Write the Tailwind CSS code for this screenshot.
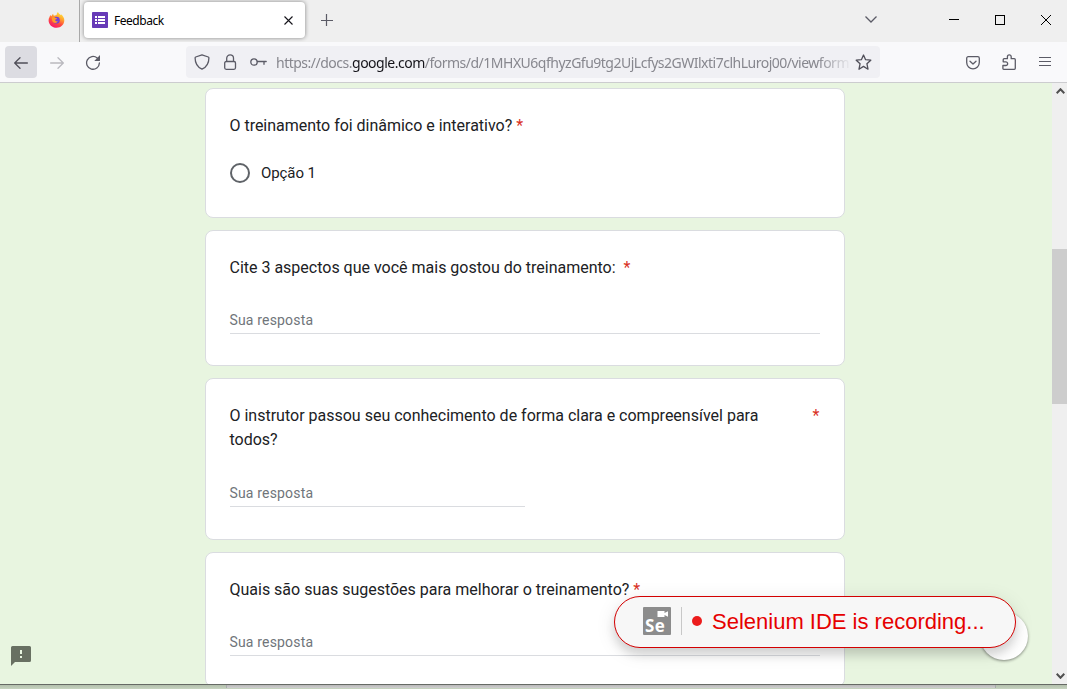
<!DOCTYPE html>
<html lang="pt-BR">
<head>
<meta charset="utf-8">
<title>Feedback</title>
<script src="https://cdn.jsdelivr.net/npm/@tailwindcss/browser@4"></script>
</head>
<body class="relative flex h-[689px] w-[1067px] flex-col overflow-hidden bg-[#c3cfbd] font-['Roboto',sans-serif] text-[#202124]">
  <!-- Tab strip -->
  <header class="flex h-[42px] shrink-0 bg-[#efefef] font-['Noto_Sans',sans-serif]">
    <div class="flex w-20 shrink-0 border-r border-[#a9a9a9] pt-3 pl-12">
      <svg class="h-4 w-[17px]" viewBox="0 0 17 16">
        <defs>
          <linearGradient id="fire" x1=".8" y1="0" x2=".3" y2="1"><stop offset="0" stop-color="#fff044"/><stop offset=".35" stop-color="#ffa52d"/><stop offset=".65" stop-color="#ff4c3f"/><stop offset="1" stop-color="#f5156c"/></linearGradient>
        </defs>
        <path fill="url(#fire)" d="M1.400 5.200 2.300 3l1 1.200L5 1.700l.8 2L8.600 3c.1-1.500.6-2.300 1.400-3 .5 1.500 1.700 1.900 2.600 3l.8-.4c1.700 1.700 2.900 3.500 2.900 5.600 0 4.300-3.300 7.500-7.700 7.500S.6 12.500.6 8.400c0-1.200.2-2.200.8-3.200Z"/>
        <circle cx="8.400" cy="8.200" r="3.400" fill="#7542d5"/>
        <path fill="#ff9b26" d="M4 5.500c1.500-.8 3-.4 3.500.5l1.600.2c-.2.900-1.300 1.200-2 1.500.1 1.300 1.200 1.900 2.700 1.300C9.300 11 6.500 11.600 5 10 3.900 8.700 3.700 7 4 5.500Z"/>
      </svg>
    </div>
    <div class="mt-[2px] ml-1 flex h-9 w-[221px] items-center rounded bg-white pl-2 shadow-[0_0_4px_rgba(0,0,0,.45)]">
      <svg class="size-4" viewBox="0 0 16 16"><rect width="16" height="16" rx=".8" fill="#673ab7"/><path fill="#fff" d="M3 4h2v2H3zm3 0h7v2H6zM3 7h2v2H3zm3 0h7v2H6zM3 10h2v2H3zm3 0h7v2H6z"/></svg>
      <span class="mt-px ml-[6px] text-[12px] tracking-[-0.47px] text-black">Feedback</span>
      <svg class="mr-3 ml-auto size-[9px]" viewBox="0 0 9 9" fill="none" stroke="#15141a" stroke-width="1.100"><path d="m.5.500 8 8m0-8-8 8"/></svg>
    </div>
    <svg class="mt-[14px] ml-4 size-3" viewBox="0 0 12 12" stroke="#5b5b66" stroke-width="1.200"><path d="M5.500 0v12M0 6.500h12"/></svg>
    <svg class="mt-4 ml-auto h-[7px] w-3" viewBox="0 0 12 7" fill="none" stroke="#5b5b66" stroke-width="1.300"><path d="m.5.500 5.500 5.500 5.500-5.500"/></svg>
    <div class="mt-[19px] ml-[72px] h-px w-[10px] bg-black"></div>
    <div class="mt-[15px] ml-9 size-[10px] border border-black"></div>
    <svg class="mt-[15px] mr-4 ml-9 size-[10px]" viewBox="0 0 10 10" stroke="#000" stroke-width="1"><path d="m0 0 10 10M10 0 0 10"/></svg>
  </header>

  <!-- Navigation toolbar -->
  <nav class="flex h-[41px] shrink-0 border-b border-[#cccccf] bg-[#f9f9fb] pt-1 font-['Noto_Sans',sans-serif]">
    <div class="ml-[5px] flex size-8 items-center justify-center rounded bg-[#dcdce2]">
      <svg class="mt-px h-3 w-[14px]" viewBox="0 0 14 12" fill="none" stroke="#4f4e58" stroke-width="1.300" stroke-linecap="round"><path d="M13.400 6H.8M6 .8.700 6 6 11.200"/></svg>
    </div>
    <svg class="mt-[11px] ml-[13px] h-3 w-[14px]" viewBox="0 0 14 12" fill="none" stroke="#bab9bf" stroke-width="1.300" stroke-linecap="round"><path d="M.6 6h12.600M8 .8 13.300 6 8 11.200"/></svg>
    <svg class="mt-2 ml-[21px] size-4" viewBox="0 0 16 16" fill="none" stroke="#5b5b66" stroke-width="1.300" stroke-linecap="round"><path d="M12.200 4A6.400 6.400 0 1 0 14.400 9"/><path fill="#5b5b66" stroke="none" d="M15 1v5.400c0 .3-.2.500-.5.500H9.300z"/></svg>
    <div class="ml-[85px] flex h-8 w-[694px] rounded bg-[#f0f0f4]">
      <svg class="mt-2 ml-2 size-4" viewBox="0 0 16 16" fill="none" stroke="#5b5b66" stroke-width="1.300" stroke-linejoin="round"><path d="M8 .8 14.300 3c.5.200.6.500.6.900 0 5-2.200 9-6.900 11.300C3.300 12.900 1.100 8.900 1.100 3.900c0-.4.100-.7.600-.9z"/></svg>
      <svg class="mt-2 ml-3 size-4" viewBox="0 0 16 16" fill="none" stroke="#5b5b66" stroke-width="1.300"><rect x="2.700" y="7.500" width="10.800" height="7.800" rx="1.500"/><path d="M4.700 7.500V4.300a3.400 3.400 0 0 1 6.800 0v3.200"/></svg>
      <svg class="mt-2 ml-3 h-4 w-[17px]" viewBox="0 0 17 16" fill="none" stroke="#5b5b66" stroke-width="1.300" stroke-linecap="round"><circle cx="4" cy="8" r="3.200"/><path d="M7.400 7.500h8.800M14 7.800v2.500"/></svg>
      <div class="ml-[9px] h-8 w-[576px] text-[14px] leading-[34px] tracking-[-0.5px] whitespace-nowrap text-[#87878e] [mask-image:linear-gradient(to_right,#000_94%,transparent)]">https://docs.<span class="text-[#15141a]">google.com</span>/forms/d/1MHXU6qfhyzGfu9tg2UjLcfys2GWIlxti7clhLuroj00/viewform</div>
      <svg class="mt-2 ml-[3px] size-[17px]" viewBox="0 0 17 17" fill="none" stroke="#4f4e58" stroke-width="1.300" stroke-linejoin="round"><path d="m8.500 1 2.100 4.700 5.200.5-3.900 3.500 1.100 5.500-4.500-2.800-4.500 2.800 1.100-5.500-3.900-3.500 5.200-.5z"/></svg>
    </div>
    <svg class="mt-[10px] ml-[86px] h-[14px] w-[14px]" viewBox="0 0 14 14" fill="none" stroke="#5b5b66" stroke-width="1.300" stroke-linecap="round" stroke-linejoin="round"><path d="M2.200.7h9.600a1.500 1.500 0 0 1 1.500 1.500v4.300a6.300 6.300 0 0 1-12.600 0V2.200A1.500 1.500 0 0 1 2.200.7Z"/><path d="M4 5.200 7 8l3-2.800"/></svg>
    <svg class="mt-2 ml-[22px] h-[17px] w-[15px]" viewBox="0 0 15 17" fill="none" stroke="#5b5b66" stroke-width="1.300" stroke-linejoin="round"><path d="M1.700 15.300h10.600a1 1 0 0 0 1-1V5.700a1 1 0 0 0-1-1H9.200V2.800a1.900 1.900 0 0 0-3.800 0v1.900H2.200a1 1 0 0 0-1 1v2.100h2.600a1.800 1.800 0 0 1 0 3.700H.9v3a.8.800 0 0 0 .8.800Z"/></svg>
    <svg class="mt-[10px] ml-[22px] h-3 w-3" viewBox="0 0 12 12" stroke="#5b5b66" stroke-width="1.200"><path d="M0 1.500h12M0 5.500h12M0 9.500h12"/></svg>
  </nav>

  <!-- Page -->
  <div class="flex h-[602px] shrink-0 border-b border-[#666a65] bg-[#e8f5e0]">
    <main class="ml-[205px] flex w-[640px] shrink-0 flex-col gap-3 overflow-hidden pt-[5px] text-[16px] leading-6">
      <section class="h-[130px] shrink-0 rounded-lg border border-[#dadce0] bg-white pt-[25px] pr-6 pl-[23.500px]">
        <h2 class="tracking-[-0.02px]">O treinamento foi dinâmico e interativo? <span class="text-[#d93025]">*</span></h2>
        <label class="mt-[25px] flex items-center text-[15px] leading-5 tracking-[-0.08px]"><span class="mr-[11.500px] size-5 rounded-full border-2 border-[#5f6368]"></span>Opção 1</label>
      </section>
      <section class="h-[136px] shrink-0 rounded-lg border border-[#dadce0] bg-white pt-[25px] pr-6 pl-[23.500px]">
        <h2 class="tracking-[-0.005px]">Cite 3 aspectos que você mais gostou do treinamento: &nbsp;<span class="text-[#d93025]">*</span></h2>
        <div class="mt-[28px] h-[26px] border-b border-[#dadce0] text-[14px] tracking-[0.17px] text-[#70757a]">Sua resposta</div>
      </section>
      <section class="h-[162px] shrink-0 rounded-lg border border-[#dadce0] bg-white pt-[25px] pr-6 pl-[23.500px]">
        <div class="flex justify-between"><h2 class="w-[560px] tracking-[0px]">O instrutor passou seu conhecimento de forma clara e compreensível para todos?</h2><span class="mr-[0.500px] text-[#d93025]">*</span></div>
        <div class="mt-[29px] h-[26px] w-[295px] border-b border-[#dadce0] text-[14px] tracking-[0.17px] text-[#70757a]">Sua resposta</div>
      </section>
      <section class="h-[135px] shrink-0 rounded-lg border border-[#dadce0] bg-white pt-[25px] pr-6 pl-[23.500px]">
        <h2 class="tracking-[-0.005px]">Quais são suas sugestões para melhorar o treinamento? <span class="text-[#d93025]">*</span></h2>
        <div class="mt-[28px] h-[26px] border-b border-[#dadce0] text-[14px] tracking-[0.17px] text-[#70757a]">Sua resposta</div>
      </section>
    </main>
    <aside class="ml-auto flex w-[15px] flex-col items-center bg-[#efefef] pt-[5px] pb-[5px]">
      <svg class="ml-[2px] h-[6px] w-[9px]" viewBox="0 0 9 6" fill="none" stroke="#505050" stroke-width="2"><path d="m.7 5.200 3.800-4 3.800 4"/></svg>
      <div class="mt-[155px] h-[155px] w-full bg-[#cdcdcd]"></div>
      <svg class="mt-auto ml-[2px] h-[6px] w-[9px]" viewBox="0 0 9 6" fill="none" stroke="#505050" stroke-width="2"><path d="m.7.800 3.800 4 3.800-4"/></svg>
    </aside>
  </div>

  <!-- Sliver of the window underneath -->
  <footer class="flex h-1 shrink-0 bg-linear-to-b from-[#b3bfad] to-[#c7d4c0]">
    <div class="ml-[226px] h-[3px] w-[770px] border-x border-[#a9aaad] bg-linear-to-b from-[#b8b8b8] to-[#cfcfcf]"></div>
  </footer>

  <!-- Report-a-problem button -->
  <svg class="absolute top-[646px] left-[11px] size-5" viewBox="0 0 20 20"><path fill="#687062" d="M1.500 0h17A1.500 1.500 0 0 1 20 1.500v13a1.500 1.500 0 0 1-1.500 1.500H4l-4 4V1.500A1.500 1.500 0 0 1 1.500 0Z"/><path fill="#e8f5e0" d="M9 4h2v4H9zm0 6h2v2H9z"/></svg>

  <!-- Floating button and recording banner -->
  <div class="absolute top-[612px] left-[980px] size-12 rounded-full bg-white shadow-[0_1px_3px_rgba(0,0,0,.45)]"></div>
  <div class="absolute top-[596px] left-[614px] flex h-[52px] w-[402px] items-center rounded-full border border-[#d30001] bg-[#f7f7f7] pl-7 shadow-[0_7px_10px_rgba(0,0,0,.12),0_4px_20px_rgba(0,0,0,.1)]">
    <div class="relative -mt-[2px] size-7 rounded-[1px] bg-[#8c8c8c]">
      <svg class="absolute top-1 left-[14px] h-[6px] w-[11px]" viewBox="0 0 11 6" fill="#fff"><path d="M.5 0h7v2L11 .2v5.600L7.500 4v2h-7z"/></svg>
      <span class="absolute top-[10px] left-[2px] font-['Open_Sans',sans-serif] text-[17px] leading-[18px] font-bold tracking-[0.3px] text-white">Se</span>
    </div>
    <div class="-mt-[2px] ml-[10px] h-7 w-px bg-[#c8c8c8]"></div>
    <div class="-mt-[2px] ml-[10px] size-[10px] rounded-full bg-[#ec1c1c]"></div>
    <span class="ml-[10px] font-['Liberation_Sans',sans-serif] text-[22px] leading-7 whitespace-nowrap text-[#e60000]">Selenium IDE is recording...</span>
  </div>
</body>
</html>
